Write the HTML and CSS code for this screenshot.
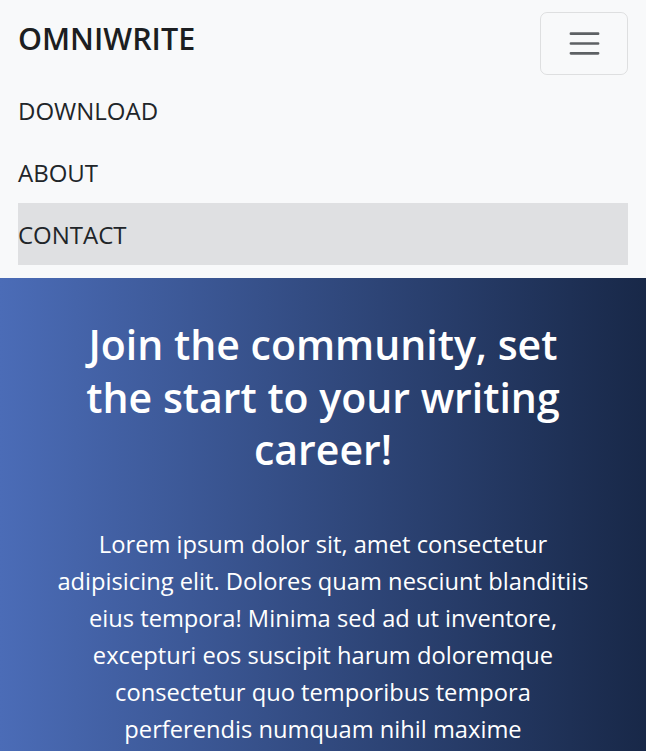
FILE: index.html
```html
<!DOCTYPE html>
<html lang="en">
<head>
<meta charset="utf-8">
<title>OmniWrite</title>
<link rel="stylesheet" href="styles.css">
</head>
<body>
<nav class="navbar">
  <div class="nav-container">
    <div class="nav-top">
      <a class="brand" href="#">OMNIWRITE</a>
      <button class="toggler" type="button" aria-label="Toggle navigation">
        <svg viewBox="0 0 30 30" width="37" height="37" aria-hidden="true">
          <path d="M4 7h22M4 15h22M4 23h22" stroke="rgba(33,37,41,0.72)" stroke-width="2.2" stroke-linecap="round" fill="none"/>
        </svg>
      </button>
    </div>
    <ul class="nav-list">
      <li><a class="nav-link" href="#">DOWNLOAD</a></li>
      <li><a class="nav-link" href="#">ABOUT</a></li>
      <li><a class="nav-link active" href="#">CONTACT</a></li>
    </ul>
  </div>
</nav>
<section class="hero">
  <div class="hero-inner">
    <h1 class="hero-title">Join the community, set the start to your writing career!</h1>
    <p class="hero-text">Lorem ipsum dolor sit, amet consectetur adipisicing elit. Dolores quam nesciunt blanditiis eius tempora! Minima sed ad ut inventore, excepturi eos suscipit harum doloremque consectetur quo temporibus tempora perferendis numquam nihil maxime</p>
  </div>
</section>
</body>
</html>
```

FILE: styles.css
```css
* { box-sizing: border-box; }
html, body { margin: 0; padding: 0; }
body {
  font-family: "Open Sans", "Noto Sans", sans-serif;
  color: #212529;
  background: #fff;
}
.navbar {
  background: #f8f9fa;
  padding: 12px 0 13px;
}
.nav-container {
  padding: 0 18px;
}
.nav-top {
  display: flex;
  justify-content: space-between;
  align-items: center;
  height: 63px;
}
.brand {
  font-size: 30.5px;
  font-weight: 600;
  color: #1c1e21;
  text-decoration: none;
  line-height: 1;
  margin-top: -10px;
}
.toggler {
  width: 88px;
  height: 63px;
  border: 1px solid rgba(0,0,0,0.1);
  border-radius: 7px;
  background: transparent;
  display: flex;
  align-items: center;
  justify-content: center;
  padding: 0;
}
.toggler svg { display: block; }
.nav-list {
  list-style: none;
  margin: 4px 0 0;
  padding: 0;
}
.nav-link {
  display: flex;
  align-items: center;
  height: 62px;
  font-size: 24px;
  color: #212529;
  text-decoration: none;
}
.nav-link.active {
  background: #dfe0e2;
}
.hero {
  background: linear-gradient(to right, #4b6cb7, #182848);
  color: #fff;
  padding: 40px 0 60px;
}
.hero-inner {
  width: 540px;
  margin: 0 auto;
  text-align: center;
}
.hero-title {
  max-width: 500px;
  margin: 0 auto 50px;
  font-size: 41px;
  font-weight: 600;
  line-height: 52.5px;
}
.hero-text {
  font-size: 23.7px;
  line-height: 37px;
  margin: 0;
}
```
